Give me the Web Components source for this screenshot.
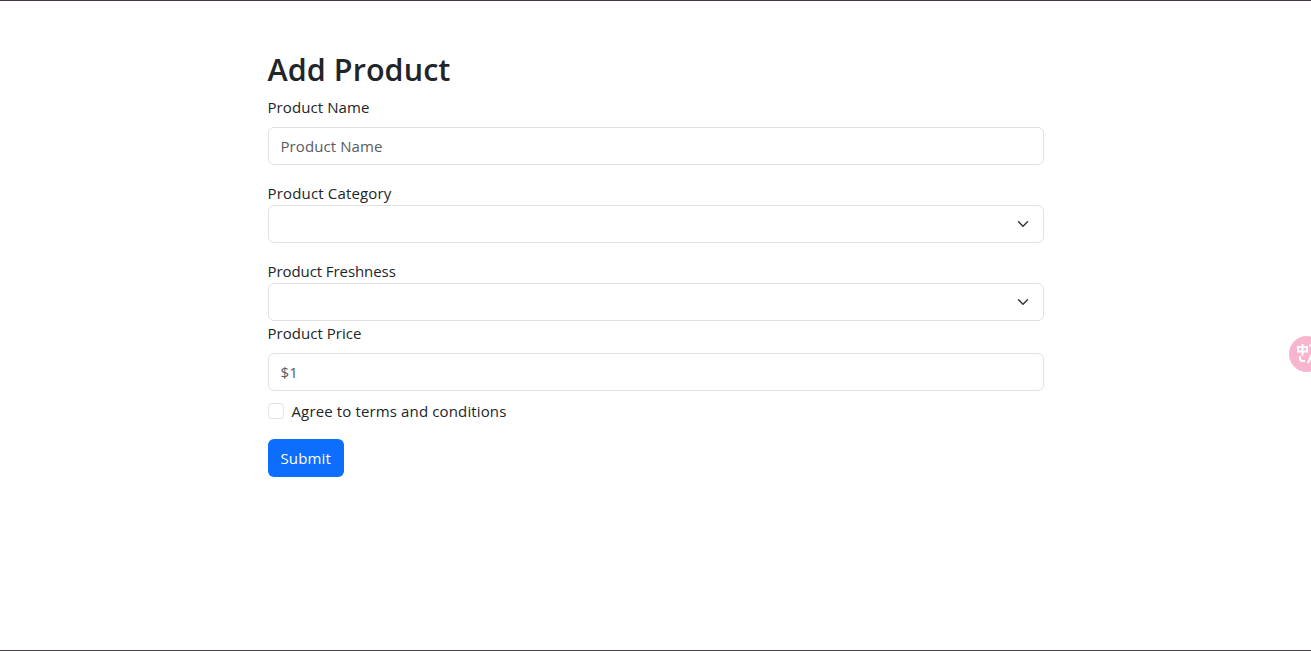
<!DOCTYPE html>
<html lang="en">
<head>
<meta charset="utf-8">
<title>Add Product</title>
<style>
html,body{margin:0;height:100%;overflow:hidden;background:#fff}
body{font-family:"Open Sans","Noto Sans",sans-serif;font-size:15px;line-height:24px;color:#212529}
</style>
</head>
<body>
<product-page></product-page>
<script>
const define = (name, html, setup) => customElements.define(name, class extends HTMLElement {
  connectedCallback() {
    if (this.shadowRoot) return;
    const t = document.createElement('template');
    t.innerHTML = html;
    this.attachShadow({mode: 'open'}).append(t.content.cloneNode(true));
    if (setup) setup(this, this.shadowRoot);
  }
});

// Text tracked so that its advance equals the width attribute.
define('fit-text', `<style>:host{display:inline-block;white-space:nowrap}span{display:inline-block}</style><span><slot></slot></span>`, (el, root) => {
  const span = root.querySelector('span');
  const target = parseFloat(el.getAttribute('width'));
  const n = el.textContent.length;
  span.style.letterSpacing = (target - span.getBoundingClientRect().width) / n + 'px';
});

define('form-label', `<style>:host{display:block;height:24px}:host([spaced]){margin-bottom:8px}</style><slot></slot>`);

define('text-field', `<style>
:host{display:block;box-sizing:border-box;height:38px;padding:6px 12px;border:1px solid #dee2e6;border-radius:6px;background:#fff;color:#595c5f}
</style><slot></slot>`);

define('select-field', `<style>
:host{display:flex;align-items:center;justify-content:flex-end;box-sizing:border-box;height:38px;padding:0 12px;border:1px solid #dee2e6;border-radius:6px;background:#fff}
svg{display:block;width:16px;height:12px}
</style><svg viewBox="0 0 16 16" fill="none" stroke="#343a40" stroke-width="2" stroke-linecap="round" stroke-linejoin="round"><path d="m2 5 6 6 6-6"/></svg>`);

define('check-field', `<style>
:host{display:flex;height:24px;gap:8px}
i{box-sizing:border-box;width:16px;height:16px;margin-top:4px;border:1px solid #dee2e6;border-radius:4px}
</style><i></i><slot></slot>`);

define('submit-button', `<style>
:host{display:block;box-sizing:border-box;width:76px;height:38px;padding:7px 13px;border-radius:6px;background:#0d6efd;color:#fff}
</style><slot></slot>`);

define('translate-badge', `<style>
:host{position:absolute;left:1289px;top:336px;width:36px;height:36px;border-radius:50%;background:#f7b5d0}
svg{display:block}
</style><svg width="36" height="36" viewBox="0 0 36 36" fill="none" stroke="#fff" stroke-width="1.9"><path d="M9 11h9v4.5H9zM13.5 8v11.5"/><path d="M11 20v2.6q0 2.4 2.4 2.4H16"/><path d="M20 9.5h7M19 27l4-9 4 9"/></svg>`);

define('product-page', `<style>
:host{display:block;position:relative;box-sizing:border-box;height:651px;overflow:hidden;border-top:1px solid #4c3549;border-bottom:1px solid #464346;padding-top:48px}
main{width:776px;margin:0 auto}
h2{box-sizing:border-box;margin:0 0 8px;padding-top:1px;font-size:30.5px;font-weight:600;line-height:38.4px;height:38.4px}
.group{margin-bottom:16px}
.check{margin:8px 0 16px}
translate-badge{top:335px}
</style>
<main>
<h2><fit-text width="183">Add Product</fit-text></h2>
<div class="group"><form-label spaced><fit-text width="102">Product Name</fit-text></form-label>
<text-field><fit-text width="102">Product Name</fit-text></text-field></div>
<div class="group"><form-label><fit-text width="124">Product Category</fit-text></form-label><select-field></select-field></div>
<div><form-label><fit-text width="128.2">Product Freshness</fit-text></form-label><select-field></select-field></div>
<form-label spaced><fit-text width="94">Product Price</fit-text></form-label>
<text-field><fit-text width="17.3">$1</fit-text></text-field>
<check-field class="check"><fit-text width="215">Agree to terms and conditions</fit-text></check-field>
<submit-button><fit-text width="50.4">Submit</fit-text></submit-button>
</main>
<translate-badge></translate-badge>`);
</script>
</body>
</html>
